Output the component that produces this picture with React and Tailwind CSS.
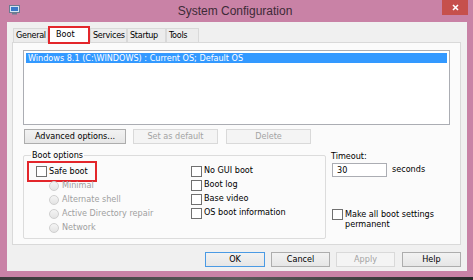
import React from "react";

const TABS = [
  { label: "General", w: "w-[35px]" },
  { label: "Boot", w: "w-[42px]", active: true },
  { label: "Services", w: "w-[37px]" },
  { label: "Startup", w: "w-[39px]" },
  { label: "Tools", w: "w-[33px]" },
];

function CheckBox() {
  return <span className="block w-[11px] h-[11px] shrink-0 border border-[#707070] bg-white" />;
}

function Radio() {
  return (
    <span className="block w-[10px] h-[10px] shrink-0 rounded-full border border-[#cfcfcf] bg-gradient-to-b from-[#f4f4f4] to-[#e4e4e4]" />
  );
}

function Button({ children, w, disabled, primary }) {
  return (
    <div
      className={`${w} h-[15px] flex items-center justify-center border leading-none ${
        disabled
          ? "border-[#d9d9d9] bg-[#f4f4f4] text-[#a3a3a3]"
          : primary
            ? "border-[#4a9ae4] bg-gradient-to-b from-[#f2f2f2] to-[#e6e6e6] text-black"
            : "border-[#adadad] bg-gradient-to-b from-[#f2f2f2] to-[#e6e6e6] text-black"
      }`}
    >
      {children}
    </div>
  );
}

export default function App() {
  return (
    <div className="w-[473px] h-[280px] overflow-hidden flex flex-col bg-[#c982a6] font-['DejaVu_Sans_Condensed','Liberation_Sans',sans-serif] text-[9px] text-black">
      {/* Title bar */}
      <div className="h-[22px] flex items-start shrink-0">
        <svg className="ml-[9px] mt-[5px]" width="11" height="10" viewBox="0 0 11 10">
          <rect x="0.5" y="0.5" width="10" height="7" fill="#d8e4f0" stroke="#6b7c92" />
          <rect x="2" y="2" width="7" height="4" fill="#3a78c8" />
          <rect x="3" y="8" width="5" height="1.5" fill="#6b7c92" />
        </svg>
        <div className="flex-1 text-center text-[12px] leading-none pt-[5px] pl-[8px] text-[#3d2a36] font-['Liberation_Sans',Arial,sans-serif]">
          System Configuration
        </div>
        <div className="w-[26px] h-[15px] mr-[5px] bg-[#c6504c] flex items-center justify-center">
          <svg width="7" height="7" viewBox="0 0 7 7">
            <path d="M1 1 6 6M6 1 1 6" stroke="#fff" strokeWidth="1.6" />
          </svg>
        </div>
      </div>

      {/* Client area */}
      <div className="ml-[7px] mr-[6px] h-[249px] shrink-0 bg-[#f0f0f0] flex flex-col pt-[4px]">
        {/* Tabs */}
        <div className="h-[16px] flex items-end pl-[6px] relative z-10">
          {TABS.map((t) =>
            t.active ? (
              <div
                key={t.label}
                className={`${t.w} h-[18px] -mb-[2px] border-2 border-[#e3262b] bg-white flex items-start pl-[6px] pt-[2px] leading-none`}
              >
                {t.label}
              </div>
            ) : (
              <div
                key={t.label}
                className={`${t.w} h-[14px] border border-b-0 border-[#d9d9d9] bg-[#ececec] flex items-center pl-[2px] leading-none whitespace-nowrap tracking-[-0.3px]`}
              >
                {t.label}
              </div>
            ),
          )}
        </div>

        {/* Tab panel */}
        <div className="ml-[5px] mr-[6px] h-[203px] border border-[#d9d9d9] bg-[#fbfbfb] flex flex-col pt-[7px] px-[10px]">
          <div className="h-[75px] border border-[#abadb3] bg-white p-[2px]">
            <div className="h-[10px] bg-[#3399ff] text-white leading-[10px] pl-[2px] whitespace-nowrap">
              Windows 8.1 (C:\WINDOWS) : Current OS; Default OS
            </div>
          </div>

          <div className="flex mt-[4px] ml-[1px]">
            <Button w="w-[102px]">Advanced options...</Button>
            <div className="ml-[7px]">
              <Button w="w-[85px]" disabled>
                Set as default
              </Button>
            </div>
            <div className="ml-[8px]">
              <Button w="w-[85px]" disabled>
                Delete
              </Button>
            </div>
          </div>

          <div className="flex mt-[11px]">
            {/* Boot options group */}
            <div className="relative w-[303px] h-[84px] border border-[#dcdcdc] rounded-[2px] pt-[8px]">
              <span className="absolute -top-[6px] left-[7px] bg-[#fbfbfb] px-[1px] leading-[11px]">
                Boot options
              </span>
              <div className="flex">
                <div className="flex flex-col ml-[3px] w-[164px]">
                  <div className="h-[21px] w-[70px] -mt-[3px] -mb-[3px] border-2 border-[#e3262b] flex items-center pl-[7px] gap-[2px]">
                    <CheckBox />
                    <span>Safe boot</span>
                  </div>
                  {["Minimal", "Alternate shell", "Active Directory repair", "Network"].map((r) => (
                    <div key={r} className="h-[14px] flex items-center pl-[22px] gap-[3px] text-[#a0a0a0]">
                      <Radio />
                      <span>{r}</span>
                    </div>
                  ))}
                </div>
                <div className="flex flex-col">
                  {["No GUI boot", "Boot log", "Base video", "OS boot information"].map((c) => (
                    <div key={c} className="h-[14px] flex items-center gap-[2px]">
                      <CheckBox />
                      <span>{c}</span>
                    </div>
                  ))}
                </div>
              </div>
            </div>

            {/* Timeout column */}
            <div className="ml-[5px] -mt-[5px] flex flex-col">
              <span className="leading-[12px]">Timeout:</span>
              <div className="flex items-center mt-[1px]">
                <div className="w-[55px] h-[14px] ml-[1px] border border-[#abadb3] bg-white pl-[4px] leading-[12px]">
                  30
                </div>
                <span className="ml-[5px]">seconds</span>
              </div>
              <div className="flex items-start mt-[31px] ml-[1px] gap-[2px]">
                <div className="mt-[1px]">
                  <CheckBox />
                </div>
                <span className="leading-[10px] pt-[1px]">
                  Make all boot settings
                  <br />
                  permanent
                </span>
              </div>
            </div>
          </div>
        </div>

        {/* Footer buttons */}
        <div className="flex justify-end mt-[7px] pr-[6px] gap-[6px]">
          <Button w="w-[60px]" primary>
            OK
          </Button>
          <Button w="w-[59px]">Cancel</Button>
          <Button w="w-[59px]" disabled>
            Apply
          </Button>
          <div className="ml-[1px]">
            <Button w="w-[59px]">Help</Button>
          </div>
        </div>
      </div>

      <div className="h-[6px] shrink-0" />
      <div className="flex-1 bg-gradient-to-r from-[#3a3a3a] via-[#5a5a5a] to-[#2a2a2a]" />
    </div>
  );
}
